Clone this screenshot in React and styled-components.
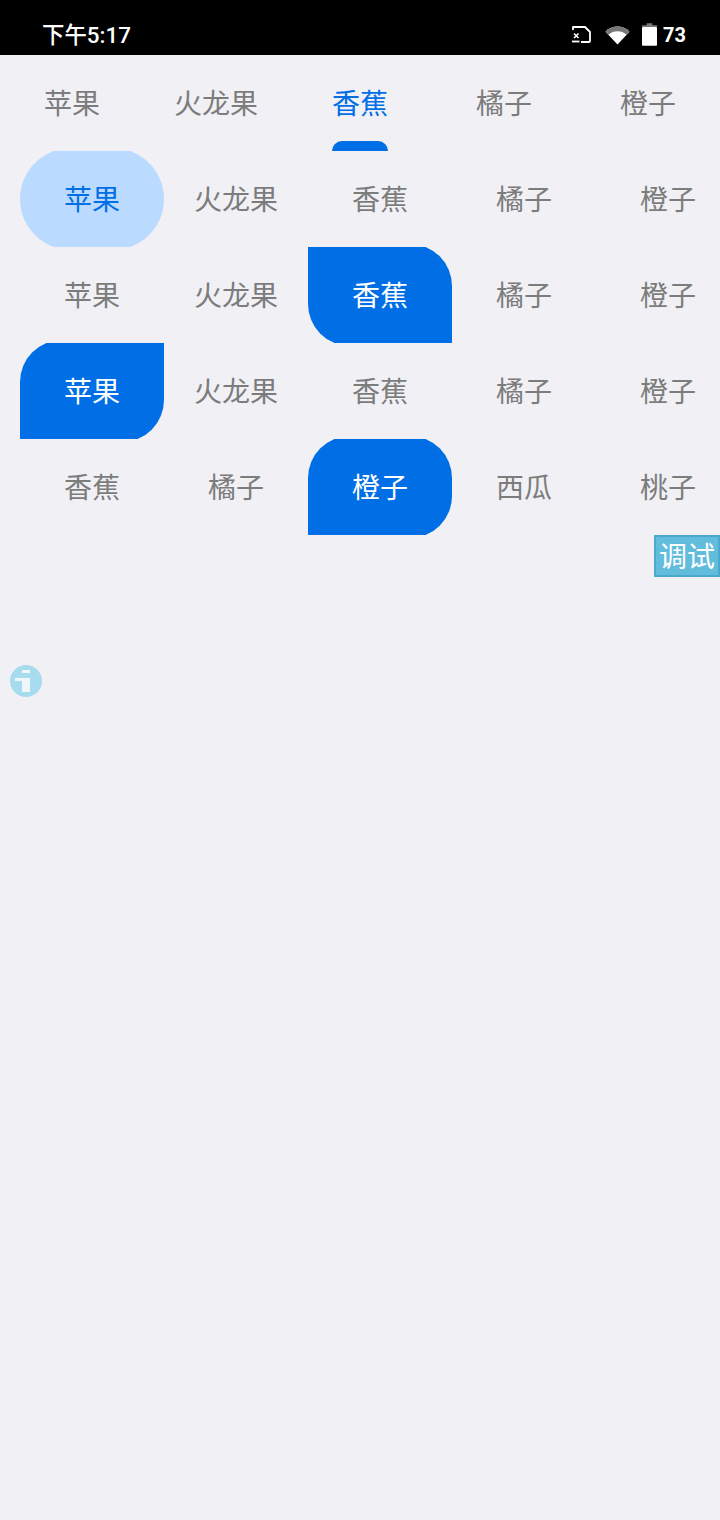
import styled, { createGlobalStyle } from "styled-components";

const GlobalStyle = createGlobalStyle`
  html, body {
    margin: 0;
    padding: 0;
    background-color: #f0f0f5;
  }
  body {
    font-family: "Noto Sans CJK SC", "Noto Sans", sans-serif;
  }
`;

const Page = styled.div`
  position: relative;
  width: 720px;
  height: 1520px;
  overflow: hidden;
  background-color: #f0f0f5;
`;

const StatusBar = styled.div`
  height: 55px;
  box-sizing: border-box;
  padding: 10px 34px 0 42px;
  display: flex;
  align-items: center;
  justify-content: space-between;
  background-color: #000;
  color: #fff;
`;

const Time = styled.div`
  font-size: 22.4px;
  font-weight: 500;
  font-family: "Roboto", "Noto Sans CJK SC", sans-serif;
`;

const StatusIcons = styled.div`
  display: flex;
  align-items: center;
  margin-top: 4px;
`;

const Battery = styled.div`
  margin-left: 6px;
  font-size: 20px;
  font-weight: 700;
  font-family: "Roboto", sans-serif;
`;

const TabBar = styled.div`
  display: flex;
  height: 96px;
`;

const Tab = styled.div`
  position: relative;
  flex: 0 0 144px;
  box-sizing: border-box;
  padding-bottom: 2px;
  display: flex;
  align-items: center;
  justify-content: center;
  font-size: 28px;
  color: ${({ $active }) => ($active ? "#006fe6" : "#7c7c7c")};
`;

const TabIndicator = styled.div`
  position: absolute;
  left: 44px;
  bottom: 0;
  width: 56px;
  height: 10px;
  border-radius: 10px 10px 0 0;
  background-color: #006fe6;
`;

const Grid = styled.div`
  display: grid;
  grid-template-columns: repeat(5, 144px);
  grid-auto-rows: 96px;
  padding-left: 20px;
  width: 720px;
`;

// the coloured shape is a little taller than its cell, which cuts off the top and bottom of the curves
const Cell = styled.div`
  display: flex;
  overflow: hidden;
`;

const shapes = {
  pill: "51px",
  leaf: "0 42px 0 42px",
  leafAlt: "42px 0 42px 0",
  tag: "42px 42px 42px 0",
};

const CellLabel = styled.div`
  flex: 1;
  margin: -3px 0;
  box-sizing: border-box;
  padding-bottom: 2px;
  display: flex;
  align-items: center;
  justify-content: center;
  font-size: 28px;
  color: ${({ $shape }) =>
    $shape === "pill" ? "#006fe6" : $shape ? "#fff" : "#7c7c7c"};
  background-color: ${({ $shape }) =>
    $shape === "pill" ? "#bbdaff" : $shape ? "#006fe6" : "transparent"};
  border-radius: ${({ $shape }) => shapes[$shape] || 0};
`;

const DebugButton = styled.div`
  position: absolute;
  top: 535px;
  right: 0;
  width: 66px;
  height: 42px;
  box-sizing: border-box;
  padding-bottom: 2px;
  display: flex;
  align-items: center;
  justify-content: center;
  border: 2px solid #4ba9d0;
  background-color: #62bcdc;
  color: #fff;
  font-size: 28px;
  white-space: nowrap;
`;

const InfoBadge = styled.div`
  position: absolute;
  left: 10px;
  top: 665px;
  width: 32px;
  height: 32px;
`;

const tabs = ["苹果", "火龙果", "香蕉", "橘子", "橙子"];

const rows = [
  [["苹果", "pill"], ["火龙果"], ["香蕉"], ["橘子"], ["橙子"]],
  [["苹果"], ["火龙果"], ["香蕉", "leaf"], ["橘子"], ["橙子"]],
  [["苹果", "leafAlt"], ["火龙果"], ["香蕉"], ["橘子"], ["橙子"]],
  [["香蕉"], ["橘子"], ["橙子", "tag"], ["西瓜"], ["桃子"]],
];

const CastIcon = () => (
  <svg width="19" height="17" viewBox="0 0 19 17" fill="none">
    <path
      d="M1 4V1H13L18 6V15C18 15.6 17.6 16 17 16H9"
      stroke="#fff"
      strokeWidth="1.8"
      strokeLinejoin="round"
    />
    <path d="M2 7.5L6.5 12M6.5 7.5L2 12" stroke="#fff" strokeWidth="1.6" />
    <path d="M0 15.5H7.5" stroke="#fff" strokeWidth="1.8" />
  </svg>
);

const WifiIcon = () => (
  <svg
    width="25"
    height="20"
    viewBox="0 0 26 20"
    style={{ marginLeft: 14 }}
  >
    <path d="M0.5 6.5C7.5 -0.5 18.5 -0.5 25.5 6.5L13 20Z" fill="#fff" />
    <path
      d="M0.5 6.5C7.5 -0.5 18.5 -0.5 25.5 6.5L22.5 9.8C16.8 5 9.2 5 3.5 9.8Z"
      fill="#777"
    />
  </svg>
);

const BatteryIcon = () => (
  <svg
    width="15"
    height="23"
    viewBox="0 0 16 24"
    style={{ marginLeft: 12 }}
  >
    <path d="M5 0H11V2H16V4H0V2H5Z" fill="#777" />
    <rect x="0" y="4" width="16" height="20" rx="1" fill="#fff" />
  </svg>
);

const InfoIcon = () => (
  <svg width="32" height="32" viewBox="0 0 32 32">
    <circle cx="16" cy="16" r="16" fill="#a6dcee" />
    <rect x="12" y="5" width="8" height="3" fill="#f0f6fa" />
    <rect x="5" y="13" width="15" height="3" fill="#f0f6fa" />
    <rect x="12" y="16" width="8" height="11" fill="#f0f6fa" />
  </svg>
);

const App = () => {
  return (
    <Page>
      <GlobalStyle />
      <StatusBar>
        <Time>下午5:17</Time>
        <StatusIcons>
          <CastIcon />
          <WifiIcon />
          <BatteryIcon />
          <Battery>73</Battery>
        </StatusIcons>
      </StatusBar>
      <TabBar>
        {tabs.map((tab, i) => (
          <Tab key={tab} $active={i === 2}>
            {tab}
            {i === 2 && <TabIndicator />}
          </Tab>
        ))}
      </TabBar>
      <Grid>
        {rows.flat().map(([label, shape], i) => (
          <Cell key={i}>
            <CellLabel $shape={shape}>{label}</CellLabel>
          </Cell>
        ))}
      </Grid>
      <DebugButton>调试</DebugButton>
      <InfoBadge>
        <InfoIcon />
      </InfoBadge>
    </Page>
  );
};

export default App;
